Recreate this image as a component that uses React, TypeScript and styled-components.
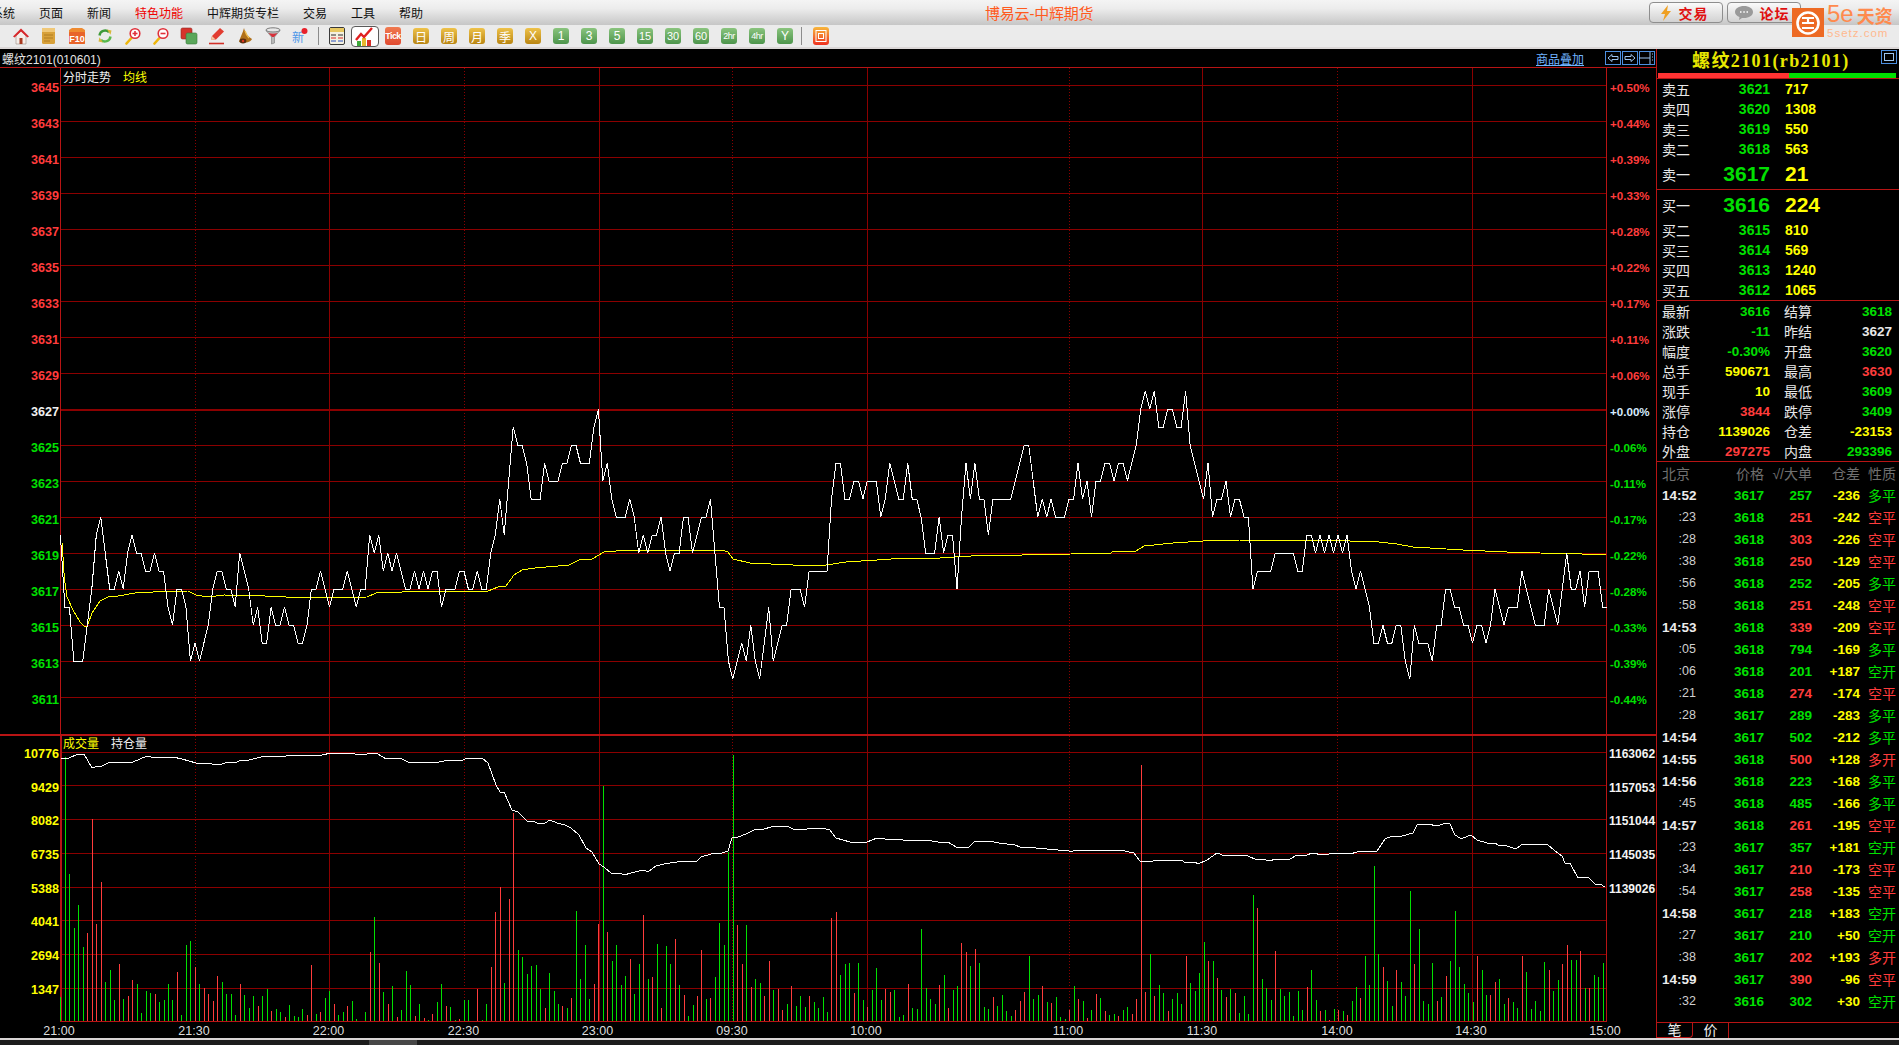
import React from 'react';
import styled, { createGlobalStyle } from 'styled-components';

const GlobalStyle = createGlobalStyle`
  html, body {
    margin: 0;
    padding: 0;
    background: #000;
    overflow: hidden;
  }
`;

const CJK = `"Liberation Sans", "Noto Sans CJK SC", sans-serif`;
const GREEN = '#00e000';
const RED = '#ff3c3c';
const YELLOW = '#ffff00';
const GRID = '#8b0000';
const RULE = '#b81414';

// closing price per minute, minus 3600
const PRICES = [
  20, 16, 16, 13, 13, 13, 15, 17, 20, 21, 19, 17, 17, 18, 17, 19, 20, 19, 19, 18,
  18, 19, 18, 18, 16, 15, 17, 17, 16, 13, 14, 13, 14, 15, 17, 18, 18, 17, 17, 16,
  19, 18, 17, 15, 16, 14, 14, 16, 15, 15, 16, 15, 15, 14, 14, 15, 17, 17, 18, 17,
  16, 17, 17, 17, 18, 17, 16, 17, 17, 20, 19, 20, 18, 19, 18, 19, 18, 17, 17, 18,
  17, 18, 17, 18, 18, 16, 17, 17, 17, 18, 18, 17, 17, 18, 17, 17, 19, 20, 22, 20,
  23, 26, 25, 25, 24, 22, 22, 22, 24, 23, 23, 23, 24, 24, 25, 25, 24, 24, 24, 26,
  27, 23, 24, 22, 21, 21, 21, 22, 21, 19, 20, 19, 20, 20, 21, 19, 18, 19, 19, 21,
  21, 19, 20, 21, 21, 22, 19, 16, 16, 13, 12, 13, 14, 13, 15, 13, 12, 14, 16, 13,
  14, 15, 15, 17, 17, 17, 16, 18, 18, 18, 18, 18, 22, 24, 24, 22, 22, 23, 23, 22,
  23, 23, 23, 21, 22, 24, 23, 22, 22, 24, 22, 22, 21, 19, 19, 19, 21, 19, 20, 20,
  17, 21, 24, 22, 24, 22, 22, 20, 22, 22, 22, 22, 22, 23, 24, 25, 25, 23, 21, 22,
  21, 22, 21, 21, 21, 22, 22, 24, 22, 23, 21, 23, 23, 24, 24, 23, 24, 24, 23, 24,
  25, 27, 28, 27, 28, 26, 26, 27, 27, 26, 26, 28, 25, 24, 23, 22, 24, 21, 22, 22,
  23, 21, 22, 22, 21, 21, 17, 18, 18, 18, 18, 19, 19, 19, 19, 19, 18, 18, 20, 20,
  19, 20, 19, 20, 19, 20, 19, 20, 18, 17, 18, 17, 16, 14, 14, 15, 14, 14, 15, 15,
  13, 12, 15, 14, 14, 14, 13, 15, 15, 17, 17, 16, 16, 15, 15, 14, 15, 15, 14, 15,
  17, 16, 15, 16, 16, 16, 18, 17, 16, 15, 15, 15, 17, 16, 15, 17, 19, 17, 17, 18,
  16, 18, 18, 18, 16, 16,
];

// bar height in px per minute, negative = red
const VOLUMES = [
  24, 264, 147, 93, 116, 74, -88, -202, -97, -139, 39, 51, 21, -57, 22, -25, -41, 37, 8, 30,
  28, -27, 19, 21, 37, 21, -49, 6, 76, 80, -54, 37, -33, -27, -20, -45, 39, 27, 27, 6,
  -37, 26, 13, 25, -15, 25, 32, -10, 12, 9, -4, 16, 5, 4, 12, -6, -56, 7, -9, 23,
  30, -17, 6, 9, -15, 20, 2, 0, 9, -69, 104, -58, 29, -17, 35, -4, 11, 50, 36, -5,
  17, -3, 1, -7, 19, 37, -15, 14, 1, -2, 21, 21, 0, -32, 1, 17, -54, -109, -134, 38,
  -122, -208, 71, 64, 47, 55, 56, 32, -13, 48, 30, 17, -15, 13, -23, 110, 42, 76, 22, -37,
  -97, 235, -89, 60, 76, 36, 45, -62, 27, 57,
  -106, 42, -44, 77, -13, 75, 57, -82, 36, -26, 5, 16, -25, -71, 22, -23, 44, 98, 76, 169,
  266, -96, -57, 96, -34, 42, 38, -25, -60, 31, -32, -11, 17, -35, 15, 25, 14, -25, 19, 13,
  24, 9, -103, -109, 46, 57, 58, -28, 58, 21, -14, 31, 53, 21, -32, -29, 31, 4, 6, -37,
  13, 12, 92, 33, 22, 17, -36, 46, -13, 31, 35, -78, -69, 55, -72, 58, 14, 12, -24, 15,
  26, 10, 5, -11, -20, -29, 65, 22, 26, -35, 19, -18, 24, 4, 2, -11, 35, -22, 20, -3,
  11, -27, 23, -10, 6, 7, -5, 11, 14, -7, -22, -256,
  -29, 67, -25, 36, 28, -10, 22, 28, 17, -65, 38, 30, 48, 79, -60, 60, -43, 31, -24, 32,
  -28, 8, 25, 7, 126, -113, 42, 33, 21, -70, 32, 25, 29, 5, 30, 11, -34, 51, 21, -10,
  11, -1, 12, -11, 10, -6, 20, 34, -23, 65, 36, 155, 67, -54, 40, 15, -51, 39, 25, 130,
  -57, 92, 20, 17, 58, -20, 24, -45, 60, 110, 54, 37, 28, 19, -65, 51, 26, -26, -39, 42,
  17, -23, 19, 13, -65, 49, 12, 20, 10, 59, -51, 30, 41, -57, -76, 61, 61, -70, 33, -33,
  46, 44, 58, 95,
];

const AVERAGE: [number, number][] = [
  [62, 543], [63, 557], [64.5, 580], [67, 597], [73, 610], [80, 622], [84, 626], [87, 627], [92, 613], [100, 601],
  [108, 597], [118, 596], [135, 593], [153, 592], [188, 591], [196, 595], [208, 597], [224, 595], [265, 596], [286, 597],
  [288, 598], [367, 597], [376, 593], [402, 592], [404, 591], [488, 591], [498, 587], [506, 586], [514, 575], [522, 570],
  [535, 568], [569, 565], [579, 560], [592, 559], [604, 552], [616, 551], [639, 550], [722, 550], [728, 552], [733, 559],
  [750, 563], [771, 564], [793, 565], [826, 565], [846, 562], [877, 560], [905, 558], [940, 558], [971, 556], [979, 555],
  [1022, 555], [1071, 554], [1073, 553], [1111, 553], [1113, 551], [1136, 551], [1144, 546], [1173, 543], [1203, 541],
  [1240, 540], [1253, 540], [1350, 541], [1370, 541], [1397, 544], [1413, 547], [1463, 550], [1507, 552], [1540, 553],
  [1582, 554], [1606, 554],
];

const OPEN_INTEREST: [number, number][] = [
  [61, 758], [69, 758], [78, 754], [84, 754], [92, 768], [98, 766], [102, 766], [110, 762], [118, 762], [133, 762],
  [147, 756], [155, 758], [173, 757], [182, 759], [196, 763], [206, 763], [218, 765], [229, 762], [237, 762], [241, 760],
  [249, 760], [261, 757], [278, 756], [286, 756], [302, 755], [322, 755], [331, 753], [347, 753], [363, 755], [371, 753],
  [378, 754], [386, 759], [400, 758], [410, 763], [435, 762], [439, 762], [449, 760], [461, 761], [467, 758], [482, 758],
  [488, 763], [496, 785], [500, 792], [504, 792], [512, 810], [518, 812], [527, 821], [533, 821], [537, 823], [545, 823],
  [550, 820], [557, 823], [565, 825], [571, 828], [579, 835], [586, 848], [592, 852], [599, 864], [604, 867], [612, 874],
  [620, 873], [624, 875], [631, 873], [639, 871], [644, 870], [648, 872], [656, 866], [664, 864], [677, 862], [693, 861],
  [696, 862], [701, 857], [711, 854], [722, 853], [728, 851], [732, 838], [738, 837], [746, 834], [756, 829], [764, 829],
  [771, 827], [787, 826], [793, 829], [803, 830], [807, 829], [822, 828], [830, 830], [836, 838], [850, 842], [867, 842],
  [877, 838], [885, 839], [903, 840], [907, 841], [926, 840], [938, 842], [948, 842], [956, 847], [969, 847], [975, 841],
  [989, 841], [999, 843], [1015, 845], [1020, 847], [1028, 847], [1036, 848], [1069, 851], [1073, 851], [1077, 850],
  [1085, 850], [1120, 850], [1134, 853], [1140, 861], [1148, 862], [1158, 860], [1171, 861], [1181, 860], [1186, 863],
  [1195, 862], [1198, 864], [1207, 860], [1217, 853], [1225, 856], [1233, 855], [1248, 856], [1257, 860], [1262, 859],
  [1270, 861], [1275, 859], [1290, 859], [1297, 855], [1307, 855], [1312, 853], [1323, 855], [1335, 853], [1350, 854],
  [1357, 852], [1367, 851], [1372, 852], [1377, 851], [1385, 839], [1392, 836], [1402, 836], [1413, 833], [1417, 825],
  [1427, 824], [1438, 826], [1445, 823], [1450, 824], [1455, 835], [1460, 838], [1463, 838], [1471, 835], [1477, 840],
  [1487, 843], [1490, 844], [1495, 843], [1498, 845], [1507, 846], [1516, 849], [1521, 845], [1527, 844], [1533, 845],
  [1547, 844], [1555, 851], [1562, 856], [1565, 863], [1570, 863], [1578, 878], [1588, 877], [1595, 884], [1600, 884], [1605, 887],
];

const VERTICALS: { x: number; dotted?: boolean }[] = [
  { x: 195, dotted: true }, { x: 329 }, { x: 464, dotted: true }, { x: 599 }, { x: 732, dotted: true },
  { x: 867 }, { x: 1069, dotted: true }, { x: 1202 }, { x: 1337, dotted: true }, { x: 1472 },
];

const PRICE_GRID = Array.from({ length: 18 }, (_, k) => 85 + k * 36);
const VOLUME_GRID = [752, 785, 819, 853, 887, 920, 954, 988];

const priceAxis = [3645, 3643, 3641, 3639, 3637, 3635, 3633, 3631, 3629, 3627, 3625, 3623, 3621, 3619, 3617, 3615, 3613, 3611];
const percentAxis = ['+0.50%', '+0.44%', '+0.39%', '+0.33%', '+0.28%', '+0.22%', '+0.17%', '+0.11%', '+0.06%', '+0.00%', '-0.06%', '-0.11%', '-0.17%', '-0.22%', '-0.28%', '-0.33%', '-0.39%', '-0.44%'];
const volumeAxis = [10776, 9429, 8082, 6735, 5388, 4041, 2694, 1347];
const interestAxis = [1163062, 1157053, 1151044, 1145035, 1139026];
const timeAxis: [string, number][] = [
  ['21:00', 59], ['21:30', 194], ['22:00', 328.5], ['22:30', 463.5], ['23:00', 597.5], ['09:30', 732],
  ['10:00', 866], ['11:00', 1068], ['11:30', 1202], ['14:00', 1337], ['14:30', 1471], ['15:00', 1605],
];

const minuteX = (i: number) => 60.4 + i * 4.483;
const toPoints = (list: [number, number][]) => list.map(([x, y]) => `${x},${y}`).join(' ');
const pricePoints = PRICES.map((p, i) => `${minuteX(i).toFixed(1)},${409 + (27 - p) * 18}`).join(' ');

const menus = ['系统', '页面', '新闻', '特色功能', '中辉期货专栏', '交易', '工具', '帮助'];
const periods = ['日', '周', '月', '季', 'X'];
const spans = ['1', '3', '5', '15', '30', '60', '2hr', '4hr', 'Y'];

const sells: [string, number, number][] = [['卖五', 3621, 717], ['卖四', 3620, 1308], ['卖三', 3619, 550], ['卖二', 3618, 563]];
const buys: [string, number, number][] = [['买二', 3615, 810], ['买三', 3614, 569], ['买四', 3613, 1240], ['买五', 3612, 1065]];

const stats: [string, string, string, string, string, string][] = [
  ['最新', '3616', GREEN, '结算', '3618', GREEN],
  ['涨跌', '-11', GREEN, '昨结', '3627', '#e8e8e8'],
  ['幅度', '-0.30%', GREEN, '开盘', '3620', GREEN],
  ['总手', '590671', YELLOW, '最高', '3630', RED],
  ['现手', '10', YELLOW, '最低', '3609', GREEN],
  ['涨停', '3844', RED, '跌停', '3409', GREEN],
  ['持仓', '1139026', YELLOW, '仓差', '-23153', YELLOW],
  ['外盘', '297275', RED, '内盘', '293396', GREEN],
];

// time, price, volume (true = red), change, kind (true = red)
const ticks: [string, number, number, boolean, string, string, boolean][] = [
  ['14:52', 3617, 257, false, '-236', '多平', false],
  [':23', 3618, 251, true, '-242', '空平', true],
  [':28', 3618, 303, true, '-226', '空平', true],
  [':38', 3618, 250, true, '-129', '空平', true],
  [':56', 3618, 252, false, '-205', '多平', false],
  [':58', 3618, 251, true, '-248', '空平', true],
  ['14:53', 3618, 339, true, '-209', '空平', true],
  [':05', 3618, 794, false, '-169', '多平', false],
  [':06', 3618, 201, false, '+187', '空开', false],
  [':21', 3618, 274, true, '-174', '空平', true],
  [':28', 3617, 289, false, '-283', '多平', false],
  ['14:54', 3617, 502, false, '-212', '多平', false],
  ['14:55', 3618, 500, true, '+128', '多开', true],
  ['14:56', 3618, 223, false, '-168', '多平', false],
  [':45', 3618, 485, false, '-166', '多平', false],
  ['14:57', 3618, 261, true, '-195', '空平', true],
  [':23', 3617, 357, false, '+181', '空开', false],
  [':34', 3617, 210, true, '-173', '空平', true],
  [':54', 3617, 258, true, '-135', '空平', true],
  ['14:58', 3617, 218, false, '+183', '空开', false],
  [':27', 3617, 210, false, '+50', '空开', false],
  [':38', 3617, 202, true, '+193', '多开', true],
  ['14:59', 3617, 390, true, '-96', '空平', true],
  [':32', 3616, 302, false, '+30', '空开', false],
];

const Screen = styled.div`
  position: relative;
  width: 1899px;
  height: 1045px;
  display: flex;
  flex-direction: column;
  overflow: hidden;
  background: #000;
  font-family: ${CJK};
`;

const TitleBar = styled.div`
  height: 25px;
  display: grid;
  grid-template-columns: 985px 110px 1fr;
  align-items: center;
  background: linear-gradient(#f4f4f4, #ececec 35%, #c6c6c6);
`;

const Menu = styled.nav`
  display: flex;
  gap: 24px;
  margin-left: -9px;
`;

const MenuItem = styled.span<{ $hot?: boolean }>`
  font-size: 12px;
  color: ${({ $hot }) => ($hot ? '#f00000' : '#111')};
  white-space: nowrap;
`;

const AppTitle = styled.div`
  font-size: 15px;
  letter-spacing: -0.2px;
  color: #ff5a1e;
  white-space: nowrap;
`;

const TitleRight = styled.div`
  display: flex;
  gap: 4px;
  margin-left: 554px;
`;

const LinkButton = styled.button`
  width: 74px;
  height: 21px;
  padding: 0 4px 0 0;
  display: flex;
  align-items: center;
  justify-content: center;
  gap: 7px;
  font: bold 14px ${CJK};
  letter-spacing: 1px;
  color: #e01010;
  border: 1px solid #8e8e8e;
  border-radius: 4px;
  background: linear-gradient(#fafafa, #d2d2d2);
`;

const Watermark = styled.div`
  position: absolute;
  left: 1792px;
  top: 8px;
  width: 107px;
  height: 30px;
  display: flex;
  gap: 3px;
`;

const WatermarkText = styled.div`
  display: flex;
  flex-direction: column;
  color: #ff8a4d;
`;

const WatermarkTop = styled.div`
  height: 18px;
  display: flex;
  align-items: flex-start;
  gap: 3px;
  font: bold 18px/18px ${CJK};
`;

const WatermarkBig = styled.span`
  margin-top: -4px;
  font: 24px/20px "Liberation Sans", sans-serif;
`;

const WatermarkUrl = styled.span`
  margin-top: 2px;
  font: 11.5px/11px "Liberation Sans", sans-serif;
  letter-spacing: 1px;
  color: #ffb98f;
`;

const Toolbar = styled.div`
  height: 22px;
  padding-left: 7px;
  display: flex;
  align-items: center;
  background: #ebebeb;
  border-bottom: 2px solid #dbd7d7;
`;

const Slot = styled.div<{ $active?: boolean }>`
  width: 28px;
  height: 21px;
  box-sizing: border-box;
  display: flex;
  align-items: center;
  justify-content: center;
  border: 1px solid ${({ $active }) => ($active ? '#5a5a5a' : 'transparent')};
  border-radius: 4px;
  background: ${({ $active }) => ($active ? '#fff' : 'transparent')};
`;

const Divider = styled.div<{ $left: number; $right: number }>`
  width: 1px;
  height: 18px;
  margin: 0 ${({ $right }) => $right}px 0 ${({ $left }) => $left}px;
  background: #8c8c8c;
`;

const PeriodButton = styled.div<{ $tone: 'gold' | 'green'; $size: number }>`
  width: 16px;
  height: 16px;
  display: flex;
  align-items: center;
  justify-content: center;
  border-radius: 3px;
  overflow: hidden;
  font-size: ${({ $size }) => $size}px;
  letter-spacing: ${({ $size }) => ($size < 10 ? -0.5 : 0)}px;
  color: #fff;
  background: ${({ $tone }) =>
    $tone === 'gold' ? 'linear-gradient(#eec24a, #b98512)' : 'linear-gradient(#8ac47e, #4e954c)'};
`;

const Main = styled.div`
  height: 989px;
  flex: none;
  display: flex;
`;

const ChartColumn = styled.div`
  width: 1656px;
  display: flex;
  flex-direction: column;
`;

const ChartHeader = styled.div`
  height: 18px;
  flex: none;
  padding-right: 1px;
  display: flex;
  align-items: center;
  border-bottom: 1px solid ${RULE};
`;

const SymbolName = styled.span`
  margin-left: 2px;
  font-size: 12px;
  color: #e4e4e4;
`;

const OverlayLink = styled.span`
  margin-left: auto;
  margin-right: 20px;
  font-size: 12px;
  color: #70b4ff;
  text-decoration: underline;
`;

const PanelIcon = styled.svg`
  display: block;
  width: 16px;
  height: 14px;
  margin-left: 1px;
`;

const Panel = styled.div<{ $height: number }>`
  position: relative;
  flex: none;
  height: ${({ $height }) => $height}px;
  display: flex;
`;

const AxisColumn = styled.div<{ $width: number; $top: number; $align: 'left' | 'right' }>`
  width: ${({ $width }) => $width}px;
  padding-top: ${({ $top }) => $top}px;
  box-sizing: border-box;
  text-align: ${({ $align }) => $align};
  font-weight: bold;
  overflow: hidden;
`;

const AxisLabel = styled.div<{ $color: string; $row: number; $size: number; $inset?: number }>`
  height: ${({ $row }) => $row}px;
  line-height: ${({ $row }) => $row}px;
  font-size: ${({ $size }) => $size}px;
  padding: 0 ${({ $inset }) => $inset ?? 0}px;
  color: ${({ $color }) => $color};
  white-space: nowrap;
`;

const PlotSvg = styled.svg`
  display: block;
  flex: none;
`;

const Legend = styled.div<{ $top: number }>`
  position: absolute;
  left: 63px;
  top: ${({ $top }) => $top}px;
  display: flex;
  gap: 12px;
  font-size: 12px;
  line-height: 16px;
`;

const LegendItem = styled.span<{ $color: string }>`
  color: ${({ $color }) => $color};
`;

const Separator = styled.div`
  height: 2px;
  flex: none;
  background: ${RULE};
`;

const TimeSvg = styled.svg`
  display: block;
  flex: none;
`;

const SidePanel = styled.aside`
  width: 243px;
  box-sizing: border-box;
  display: flex;
  flex-direction: column;
  border-left: 1px solid ${RULE};
  font-size: 14px;
  color: #e8e8e8;
`;

const QuoteTitle = styled.div`
  position: relative;
  height: 24px;
  padding-left: 35px;
  font: bold 18px/25px "Liberation Serif", "Noto Sans CJK SC", serif;
  letter-spacing: 1.4px;
  color: #e8e800;
  white-space: nowrap;
`;

const CornerIcon = styled.svg`
  position: absolute;
  right: 2px;
  top: 1px;
  width: 16px;
  height: 14px;
`;

const RatioBar = styled.div`
  height: 5px;
  margin: 0 3px 0 1px;
  display: grid;
  grid-template-columns: 131px 1fr;
`;

const RatioPart = styled.div<{ $color: string }>`
  background: ${({ $color }) => $color};
`;

const Rule = styled.div`
  height: 1px;
  flex: none;
  background: ${RULE};
`;

const BookRow = styled.div<{ $big?: boolean }>`
  height: ${({ $big }) => ($big ? 30 : 20)}px;
  padding-left: 5px;
  display: grid;
  grid-template-columns: 40px 68px 1fr;
  align-items: center;
`;

const BookPrice = styled.span<{ $big?: boolean }>`
  text-align: right;
  color: ${GREEN};
  font: bold ${({ $big }) => ($big ? 21 : 14)}px "Liberation Sans", sans-serif;
`;

const BookQty = styled.span<{ $big?: boolean }>`
  padding-left: 15px;
  color: ${YELLOW};
  font: bold ${({ $big }) => ($big ? 21 : 14)}px "Liberation Sans", sans-serif;
`;

const StatRow = styled.div`
  height: 20px;
  padding-left: 5px;
  display: grid;
  grid-template-columns: 40px 68px 54px 68px;
  align-items: center;
`;

const StatLabel = styled.span<{ $second?: boolean }>`
  padding-left: ${({ $second }) => ($second ? 14 : 0)}px;
`;

const StatValue = styled.span<{ $color: string }>`
  text-align: right;
  color: ${({ $color }) => $color};
  font: bold 13.5px "Liberation Sans", sans-serif;
`;

const TickGrid = styled.div`
  height: 22px;
  flex: none;
  padding-left: 5px;
  display: grid;
  grid-template-columns: 34px 68px 48px 48px 36px;
  align-items: center;
  text-align: right;
  white-space: nowrap;
`;

const TickHead = styled.span<{ $left?: boolean }>`
  text-align: ${({ $left }) => ($left ? 'left' : 'right')};
  color: #707070;
`;

const TickTime = styled.span<{ $minute: boolean }>`
  color: ${({ $minute }) => ($minute ? '#ececec' : '#cfcfcf')};
  font: ${({ $minute }) => ($minute ? 'bold 13.5px' : '12.5px')} "Liberation Sans", sans-serif;
`;

const TickValue = styled.span<{ $color: string }>`
  color: ${({ $color }) => $color};
  font: bold 13.5px "Liberation Sans", sans-serif;
`;

const TickKind = styled.span<{ $color: string }>`
  color: ${({ $color }) => $color};
`;

const TabStrip = styled.div`
  height: 16px;
  margin-top: 10px;
  flex: none;
  display: flex;
  align-items: stretch;
  border-top: 1px solid ${RULE};
  box-sizing: border-box;
`;

const Tab = styled.div<{ $active?: boolean }>`
  width: 36px;
  box-sizing: border-box;
  line-height: 15px;
  text-align: center;
  font-size: 14px;
  color: #f0f0f0;
  border-right: 1px solid ${RULE};
  border-bottom: ${({ $active }) => ($active ? `1px solid ${RULE}` : 'none')};
  border-bottom-right-radius: ${({ $active }) => ($active ? 4 : 0)}px;
`;

const BottomStrip = styled.div`
  height: 7px;
  flex: none;
  box-sizing: border-box;
  padding-left: 369px;
  background: #1c1c1c;
  border-top: 2px solid #d8d4d4;
`;

const ScrollThumb = styled.div`
  width: 48px;
  height: 5px;
  background: #474747;
`;

const Gridlines: React.FC<{ rows: number[]; top: number; bottom: number; thick?: number; axis?: number }> = ({
  rows,
  top,
  bottom,
  thick,
  axis = 1,
}) => (
  <g shapeRendering="crispEdges">
    {rows.map((y) => (
      <line key={y} x1={60} x2={1606} y1={y + 0.5} y2={y + 0.5} stroke={GRID} strokeWidth={y === thick ? 2 : 1} />
    ))}
    {VERTICALS.map(({ x, dotted }) => (
      <line
        key={x}
        x1={x + 0.5}
        x2={x + 0.5}
        y1={top}
        y2={bottom}
        stroke={GRID}
        strokeDasharray={dotted ? '1 2' : undefined}
      />
    ))}
    <line x1={60 + axis / 2} x2={60 + axis / 2} y1={top} y2={bottom} stroke={RULE} strokeWidth={axis} />
    <line x1={1606.5} x2={1606.5} y1={top} y2={bottom} stroke={RULE} />
  </g>
);

const Arrow: React.FC<{ kind: 'left' | 'right' | 'split' | 'box' }> = ({ kind }) => (
  <>
    <rect x="0.5" y="0.5" width="15" height="13" fill="none" stroke="#4c8fe0" />
    {kind === 'left' && <path d="M3 7l4-3.5v2h6v3H7v2z" fill="none" stroke="#9cc4f0" />}
    {kind === 'right' && <path d="M13 7L9 3.5v2H3v3h6v2z" fill="none" stroke="#9cc4f0" />}
    {kind === 'split' && <path d="M0 7h11M11 1v12M13 3h1M13 6h1M13 9h1" fill="none" stroke="#9cc4f0" />}
    {kind === 'box' && <rect x="3.5" y="3.5" width="9" height="7" fill="none" stroke="#9cc4f0" />}
  </>
);

const HomeIcon = () => (
  <svg width="18" height="18" viewBox="0 0 18 18">
    <path d="M4 9v8h10V9L9 4z" fill="#f4eeea" stroke="#9a8a80" strokeWidth="0.6" />
    <path d="M1 9.5L9 1.5l8 8-1.6 1L9 4.6 2.6 10.5z" fill="#d8262a" />
    <rect x="7.5" y="11" width="3" height="6" fill="#a83a20" />
  </svg>
);

const NoteIcon = () => (
  <svg width="16" height="18" viewBox="0 0 16 18">
    <rect x="1" y="1" width="13" height="16" rx="1.5" fill="#d8a13a" />
    <rect x="1" y="1" width="13" height="4" fill="#f0c878" />
    <path d="M3 8h9M3 11h9M3 14h6" stroke="#b07d20" />
  </svg>
);

const F10Icon = () => (
  <svg width="18" height="18" viewBox="0 0 18 18">
    <path d="M1 3l3-2 10 0 3 2v13a1 1 0 0 1-1 1H2a1 1 0 0 1-1-1z" fill="#ee8a30" />
    <rect x="1" y="5" width="16" height="12" rx="1" fill="#e8642a" />
    <text x="9" y="14.5" textAnchor="middle" fontSize="9" fontWeight="bold" fill="#fff" fontFamily="Liberation Sans">F10</text>
  </svg>
);

const RefreshIcon = () => (
  <svg width="16" height="18" viewBox="0 0 16 18" fill="none">
    <path d="M2.5 8.5A5.6 5.6 0 0 1 12 5.2" stroke="#3e9a3a" strokeWidth="2.4" />
    <path d="M13.5 9.5A5.6 5.6 0 0 1 4 12.8" stroke="#58b84c" strokeWidth="2.4" />
    <path d="M10 2.5l4.5 1-1 4.2zM6 15.5l-4.5-1 1-4.2z" fill="#d8b83a" />
  </svg>
);

const ZoomIcon: React.FC<{ plus?: boolean }> = ({ plus }) => (
  <svg width="16" height="18" viewBox="0 0 16 18" fill="none">
    <path d="M6 11.5l-4.5 5" stroke="#eeb60c" strokeWidth="2.6" strokeLinecap="round" />
    <circle cx="10" cy="6.5" r="4.8" fill="#fff" stroke="#e0303a" strokeWidth="1.6" />
    <path d="M7.5 6.5h5" stroke="#e0303a" strokeWidth="1.6" />
    {plus && <path d="M10 4v5" stroke="#e0303a" strokeWidth="1.6" />}
  </svg>
);

const CopyIcon = () => (
  <svg width="18" height="18" viewBox="0 0 18 18">
    <rect x="1" y="1" width="11" height="11" rx="1.5" fill="#d6332c" stroke="#8e2a22" strokeWidth="0.6" />
    <rect x="6" y="6" width="11" height="11" rx="1.5" fill="#5aa65a" stroke="#3a7a3a" strokeWidth="0.6" />
  </svg>
);

const PenIcon = () => (
  <svg width="18" height="18" viewBox="0 0 18 18">
    <path d="M3 13l1-4L12 1l4 3.5-8 8z" fill="#e23c30" />
    <path d="M3 13l1-4 3.6 3.4z" fill="#f2c8a0" />
    <path d="M1 16.5h15" stroke="#d23028" strokeWidth="1.6" />
  </svg>
);

const HornIcon = () => (
  <svg width="16" height="18" viewBox="0 0 16 18">
    <path d="M7 1c1 4 3 8 8 11-1 3-8 5-13 3C3 10 6 6 7 1z" fill="#b0701a" />
    <ellipse cx="6" cy="14" rx="3.4" ry="2.4" fill="#5a2e10" />
    <circle cx="6" cy="14" r="1.2" fill="#e03820" />
    <path d="M8 4c1 3 2 5 4 7" stroke="#eebd50" strokeWidth="1.4" fill="none" />
  </svg>
);

const FunnelIcon = () => (
  <svg width="16" height="18" viewBox="0 0 16 18">
    <ellipse cx="8" cy="3" rx="7" ry="2.2" fill="#e8e8e8" stroke="#7a7a7a" />
    <path d="M1 3.5L6.5 10v7l3-1v-6L15 3.5c-3 2-11 2-14 0z" fill="#b8b8b8" stroke="#7a7a7a" strokeWidth="0.6" />
    <path d="M3.5 6c3 1 6 1 9 0L9 10H7z" fill="#d8303a" />
  </svg>
);

const NewIcon = () => (
  <svg width="18" height="18" viewBox="0 0 18 18">
    <text x="0" y="15" fontSize="12" fill="#4f97e8" fontFamily="Noto Sans CJK SC">新</text>
    <circle cx="12.5" cy="4" r="3" fill="#e8202a" />
  </svg>
);

const TableIcon = () => (
  <svg width="16" height="18" viewBox="0 0 16 18">
    <rect x="0.5" y="0.5" width="15" height="17" rx="1.5" fill="#f4f0e0" stroke="#3a3a3a" />
    <rect x="1" y="1" width="14" height="4" fill="#e8c860" />
    <path d="M2 8h5M9 8h5" stroke="#2a2a2a" />
    <path d="M2 11h5M9 11h5" stroke="#d82828" />
    <path d="M2 14h5M9 14h5" stroke="#2a50c0" />
  </svg>
);

const TrendIcon = () => (
  <svg width="20" height="19" viewBox="0 0 20 19" fill="none">
    <rect x="2" y="14" width="4" height="5" fill="#3ea83a" />
    <rect x="7" y="11" width="4" height="8" fill="#e8b830" />
    <rect x="12" y="13" width="4" height="6" fill="#d83028" />
    <path d="M1 13l5-6 3 3 8-9" stroke="#e02020" strokeWidth="2.4" />
  </svg>
);

const TickIcon = styled.div`
  width: 16px;
  height: 18px;
  border-radius: 3px;
  background: linear-gradient(#f07a50, #e04a30);
  font: bold 9px/18px "Liberation Sans", sans-serif;
  letter-spacing: -0.6px;
  text-align: center;
  color: #fff;
  overflow: hidden;
`;

const BoardIcon = () => (
  <svg width="16" height="18" viewBox="0 0 16 18" fill="none">
    <defs>
      <linearGradient id="boardFill" x1="0" y1="0" x2="0" y2="1">
        <stop offset="0" stopColor="#f7b83c" />
        <stop offset="1" stopColor="#ee3020" />
      </linearGradient>
    </defs>
    <rect width="16" height="18" rx="3" fill="url(#boardFill)" />
    <rect x="3" y="3.5" width="10" height="11" stroke="#fff" />
    <rect x="5.5" y="6.5" width="5" height="5" stroke="#fff" />
  </svg>
);

const BoltIcon = () => (
  <svg width="12" height="16" viewBox="0 0 12 16">
    <path d="M8 0L1 9h4l-2 7 8-10H7z" fill="#efa022" />
  </svg>
);

const ChatIcon = () => (
  <svg width="18" height="14" viewBox="0 0 18 14">
    <path d="M9 0c5 0 9 2.500 9 6s-4 6-9 6H7l-3 2 .5-3C2 10 0 8.500 0 6c0-3.500 4-6 9-6z" fill="#9a9a9a" />
    <path d="M5 6h1.500M8.300 6h1.500M11.500 6H13" stroke="#fff" strokeWidth="1.400" />
  </svg>
);

const LogoMark = () => (
  <svg width="32" height="29" viewBox="0 0 32 29" fill="none">
    <rect width="32" height="29" fill="#ed6a24" />
    <circle cx="16" cy="15" r="10.500" stroke="#fff" strokeWidth="2.600" />
    <path d="M10 10h12M10 15h12M16 10v5M10 20h12" stroke="#fff" strokeWidth="2.200" />
  </svg>
);

const spanSize = (s: string) => (s.length === 1 ? 12 : s.length === 2 ? 11 : 9);

export default function App() {
  return (
    <Screen>
      <GlobalStyle />
      <TitleBar>
        <Menu>
          {menus.map((m) => (
            <MenuItem key={m} $hot={m === '特色功能'}>
              {m}
            </MenuItem>
          ))}
        </Menu>
        <AppTitle>博易云-中辉期货</AppTitle>
        <TitleRight>
          <LinkButton>
            <BoltIcon />
            交易
          </LinkButton>
          <LinkButton>
            <ChatIcon />
            论坛
          </LinkButton>
        </TitleRight>
      </TitleBar>
      <Watermark>
        <LogoMark />
        <WatermarkText>
          <WatermarkTop>
            <WatermarkBig>5e</WatermarkBig>天资
          </WatermarkTop>
          <WatermarkUrl>5setz.com</WatermarkUrl>
        </WatermarkText>
      </Watermark>

      <Toolbar>
        <Slot><HomeIcon /></Slot>
        <Slot><NoteIcon /></Slot>
        <Slot><F10Icon /></Slot>
        <Slot><RefreshIcon /></Slot>
        <Slot><ZoomIcon plus /></Slot>
        <Slot><ZoomIcon /></Slot>
        <Slot><CopyIcon /></Slot>
        <Slot><PenIcon /></Slot>
        <Slot><HornIcon /></Slot>
        <Slot><FunnelIcon /></Slot>
        <Slot><NewIcon /></Slot>
        <Divider $left={3} $right={4} />
        <Slot><TableIcon /></Slot>
        <Slot $active><TrendIcon /></Slot>
        <Slot><TickIcon>Tick</TickIcon></Slot>
        {periods.map((p) => (
          <Slot key={p}><PeriodButton $tone="gold" $size={12}>{p}</PeriodButton></Slot>
        ))}
        {spans.map((s) => (
          <Slot key={s}>
            <PeriodButton $tone="green" $size={spanSize(s)}>{s}</PeriodButton>
          </Slot>
        ))}
        <Divider $left={2} $right={5} />
        <Slot><BoardIcon /></Slot>
      </Toolbar>

      <Main>
        <ChartColumn>
          <ChartHeader>
            <SymbolName>螺纹2101(010601)</SymbolName>
            <OverlayLink>商品叠加</OverlayLink>
            <PanelIcon viewBox="0 0 16 14"><Arrow kind="left" /></PanelIcon>
            <PanelIcon viewBox="0 0 16 14"><Arrow kind="right" /></PanelIcon>
            <PanelIcon viewBox="0 0 16 14"><Arrow kind="split" /></PanelIcon>
          </ChartHeader>

          <Panel $height={666}>
            <AxisColumn $width={60} $top={2} $align="right">
              {priceAxis.map((p) => (
                <AxisLabel
                  key={p}
                  $row={36}
                  $size={12.6}
                  $inset={1}
                  $color={p > 3627 ? RED : p === 3627 ? '#f0f0f0' : GREEN}
                >
                  {p}
                </AxisLabel>
              ))}
            </AxisColumn>
            <PlotSvg width={1547} height={666} viewBox="60 68 1547 666">
              <Gridlines rows={PRICE_GRID} top={68} bottom={734} thick={409} />
              <polyline points={toPoints(AVERAGE)} fill="none" stroke={YELLOW} shapeRendering="crispEdges" />
              <polyline points={pricePoints} fill="none" stroke="#fff" shapeRendering="crispEdges" />
            </PlotSvg>
            <AxisColumn $width={49} $top={2} $align="left">
              {percentAxis.map((p, i) => (
                <AxisLabel
                  key={p}
                  $row={36}
                  $size={11.6}
                  $inset={3}
                  $color={i < 9 ? RED : i === 9 ? '#d8ecff' : GREEN}
                >
                  {p}
                </AxisLabel>
              ))}
            </AxisColumn>
            <Legend $top={2}>
              <LegendItem $color="#f0f0f0">分时走势</LegendItem>
              <LegendItem $color={YELLOW}>均线</LegendItem>
            </Legend>
          </Panel>

          <Separator />

          <Panel $height={286}>
            <AxisColumn $width={60} $top={2} $align="right">
              {volumeAxis.map((v) => (
                <AxisLabel key={v} $row={33.7} $size={12.6} $inset={1} $color={YELLOW}>
                  {v}
                </AxisLabel>
              ))}
            </AxisColumn>
            <PlotSvg width={1547} height={286} viewBox="60 736 1547 286">
              <Gridlines rows={VOLUME_GRID} top={736} bottom={1022} axis={2} />
              <g shapeRendering="crispEdges">
                {VOLUMES.map((v, i) =>
                  v === 0 ? null : (
                    <rect
                      key={i}
                      x={Math.round(minuteX(i))}
                      y={1021 - Math.abs(v)}
                      width={1}
                      height={Math.abs(v)}
                      fill={v > 0 ? GREEN : RED}
                    />
                  ),
                )}
                <line x1={60} x2={1607} y1={1021.5} y2={1021.5} stroke={RULE} />
              </g>
              <polyline points={toPoints(OPEN_INTEREST)} fill="none" stroke="#fff" shapeRendering="crispEdges" />
            </PlotSvg>
            <AxisColumn $width={49} $top={2} $align="left">
              {interestAxis.map((v) => (
                <AxisLabel key={v} $row={33.7} $size={12} $inset={2} $color="#f4f4f4">
                  {v}
                </AxisLabel>
              ))}
            </AxisColumn>
            <Legend $top={0}>
              <LegendItem $color={YELLOW}>成交量</LegendItem>
              <LegendItem $color="#f0f0f0">持仓量</LegendItem>
            </Legend>
          </Panel>

          <TimeSvg width={1656} height={16} viewBox="0 1022 1656 16">
            {timeAxis.map(([label, x]) => (
              <text
                key={label}
                x={x}
                y={1034.5}
                textAnchor="middle"
                fontSize="12.5"
                fill="#dedede"
                fontFamily="Liberation Sans"
              >
                {label}
              </text>
            ))}
          </TimeSvg>
        </ChartColumn>

        <SidePanel>
          <QuoteTitle>
            螺纹2101(rb2101)
            <CornerIcon viewBox="0 0 16 14"><Arrow kind="box" /></CornerIcon>
          </QuoteTitle>
          <RatioBar>
            <RatioPart $color="#ff3333" />
            <RatioPart $color={GREEN} />
          </RatioBar>
          <Rule />
          {sells.map(([label, price, qty]) => (
            <BookRow key={label}>
              <span>{label}</span>
              <BookPrice>{price}</BookPrice>
              <BookQty>{qty}</BookQty>
            </BookRow>
          ))}
          <BookRow $big>
            <span>卖一</span>
            <BookPrice $big>3617</BookPrice>
            <BookQty $big>21</BookQty>
          </BookRow>
          <Rule />
          <BookRow $big>
            <span>买一</span>
            <BookPrice $big>3616</BookPrice>
            <BookQty $big>224</BookQty>
          </BookRow>
          {buys.map(([label, price, qty]) => (
            <BookRow key={label}>
              <span>{label}</span>
              <BookPrice>{price}</BookPrice>
              <BookQty>{qty}</BookQty>
            </BookRow>
          ))}
          <Rule />
          {stats.map(([l1, v1, c1, l2, v2, c2]) => (
            <StatRow key={l1}>
              <StatLabel>{l1}</StatLabel>
              <StatValue $color={c1}>{v1}</StatValue>
              <StatLabel $second>{l2}</StatLabel>
              <StatValue $color={c2}>{v2}</StatValue>
            </StatRow>
          ))}
          <Rule />
          <TickGrid>
            <TickHead $left>北京</TickHead>
            <TickHead>价格</TickHead>
            <TickHead>√/大单</TickHead>
            <TickHead>仓差</TickHead>
            <TickHead>性质</TickHead>
          </TickGrid>
          {ticks.map(([time, price, volume, volumeRed, change, kind, kindRed], i) => (
            <TickGrid key={i}>
              <TickTime $minute={time.length > 3}>{time}</TickTime>
              <TickValue $color={GREEN}>{price}</TickValue>
              <TickValue $color={volumeRed ? RED : GREEN}>{volume}</TickValue>
              <TickValue $color={YELLOW}>{change}</TickValue>
              <TickKind $color={kindRed ? RED : GREEN}>{kind}</TickKind>
            </TickGrid>
          ))}
          <TabStrip>
            <Tab $active>笔</Tab>
            <Tab>价</Tab>
          </TabStrip>
        </SidePanel>
      </Main>

      <BottomStrip>
        <ScrollThumb />
      </BottomStrip>
    </Screen>
  );
}
